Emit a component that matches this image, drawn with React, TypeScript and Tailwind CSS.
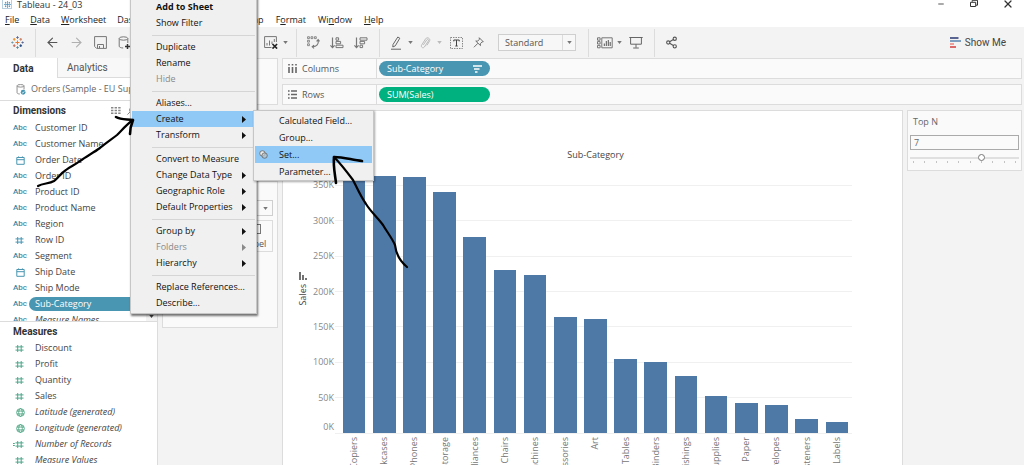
import React, { useState } from 'react'
import { ArrowLeft, ArrowRight, Minus, Share2, X } from 'lucide-react'

type FieldKind = 'text' | 'date' | 'number' | 'geo' | 'calc'

interface Field {
  name: string
  kind: FieldKind
  generated?: boolean
  selected?: boolean
}

interface MenuEntry {
  label: string
  sub?: boolean
  bold?: boolean
  disabled?: boolean
  active?: boolean
}

const menuBarLeft = [
  ['', 'F', 'ile'],
  ['', 'D', 'ata'],
  ['', 'W', 'orksheet'],
  ['Dash', 'b', 'oard'],
]

const menuBarRight = [
  ['', 'M', 'ap'],
  ['F', 'o', 'rmat'],
  ['Wi', 'n', 'dow'],
  ['', 'H', 'elp'],
]

const dimensions: Field[] = [
  { name: 'Customer ID', kind: 'text' },
  { name: 'Customer Name', kind: 'text' },
  { name: 'Order Date', kind: 'date' },
  { name: 'Order ID', kind: 'text' },
  { name: 'Product ID', kind: 'text' },
  { name: 'Product Name', kind: 'text' },
  { name: 'Region', kind: 'text' },
  { name: 'Row ID', kind: 'number' },
  { name: 'Segment', kind: 'text' },
  { name: 'Ship Date', kind: 'date' },
  { name: 'Ship Mode', kind: 'text' },
  { name: 'Sub-Category', kind: 'text', selected: true },
  { name: 'Measure Names', kind: 'text', generated: true },
]

const measures: Field[] = [
  { name: 'Discount', kind: 'number' },
  { name: 'Profit', kind: 'number' },
  { name: 'Quantity', kind: 'number' },
  { name: 'Sales', kind: 'number' },
  { name: 'Latitude (generated)', kind: 'geo', generated: true },
  { name: 'Longitude (generated)', kind: 'geo', generated: true },
  { name: 'Number of Records', kind: 'calc', generated: true },
  { name: 'Measure Values', kind: 'number', generated: true },
]

const contextMenu: MenuEntry[][] = [
  [{ label: 'Add to Sheet', bold: true }, { label: 'Show Filter' }],
  [{ label: 'Duplicate' }, { label: 'Rename' }, { label: 'Hide', disabled: true }],
  [{ label: 'Aliases...' }, { label: 'Create', sub: true, active: true }, { label: 'Transform', sub: true }],
  [
    { label: 'Convert to Measure' },
    { label: 'Change Data Type', sub: true },
    { label: 'Geographic Role', sub: true },
    { label: 'Default Properties', sub: true },
  ],
  [{ label: 'Group by', sub: true }, { label: 'Folders', sub: true, disabled: true }, { label: 'Hierarchy', sub: true }],
  [{ label: 'Replace References...' }, { label: 'Describe...' }],
]

const createMenu = ['Calculated Field...', 'Group...', 'Set...', 'Parameter...']

// Sales in thousands
const bars = [
  { name: 'Copiers', value: 368 },
  { name: 'Bookcases', value: 364 },
  { name: 'Phones', value: 362 },
  { name: 'Storage', value: 341 },
  { name: 'Appliances', value: 277 },
  { name: 'Chairs', value: 230 },
  { name: 'Machines', value: 224 },
  { name: 'Accessories', value: 164 },
  { name: 'Art', value: 161 },
  { name: 'Tables', value: 105 },
  { name: 'Binders', value: 100 },
  { name: 'Furnishings', value: 81 },
  { name: 'Supplies', value: 53 },
  { name: 'Paper', value: 43 },
  { name: 'Envelopes', value: 40 },
  { name: 'Fasteners', value: 20 },
  { name: 'Labels', value: 16 },
]
const axisMax = 376
const ticks = [0, 50, 100, 150, 200, 250, 300, 350]

const Logo = ({ className }: { className: string }) => (
  <svg viewBox="0 0 14 14" className={className} fill="none" strokeWidth="1.1">
    <path d="M7 4.8v4.4M4.8 7h4.4" stroke="#e8762c" />
    <path d="M7 .4v2.6M5.7 1.7h2.6" stroke="#5b6591" />
    <path d="M7 11v2.6M5.7 12.3h2.6" stroke="#5b879b" />
    <path d="M.3 7h2.4M1.5 5.8v2.4" stroke="#7099a6" />
    <path d="M11.3 7h2.4M12.5 5.8v2.4" stroke="#5b6591" />
    <path d="M3.5 2.2v2.8M2.1 3.6h2.8" stroke="#eb912c" />
    <path d="M10.5 2.2v2.8M9.1 3.6h2.8" stroke="#c98060" />
    <path d="M3.5 9v2.8M2.1 10.4h2.8" stroke="#c96a5a" />
    <path d="M10.5 9v2.8M9.1 10.4h2.8" stroke="#1f447e" />
  </svg>
)

const TitleLogo = () => (
  <svg viewBox="0 0 8 8" className="h-[7px] w-[7px]" fill="none" stroke="#3f86b5">
    <path d="M4 0v8M0 4h8M1.8 1v2M1 2h1.8M6.2 1v2M5.2 2H7M1.8 5v2M1 6h1.8M6.2 5v2M5.2 6H7" strokeWidth=".8" />
  </svg>
)

const Caret = ({ className = 'text-[#777]' }: { className?: string }) => (
  <svg viewBox="0 0 6 4" className={`h-[3px] w-[5px] shrink-0 ${className}`}>
    <path d="M0 0h6L3 4z" fill="currentColor" />
  </svg>
)

const KindIcon = ({ kind }: { kind: FieldKind }) => {
  if (kind === 'text') return <span className="font-['Roboto',sans-serif] text-[8px] font-medium text-[#3f87a3]">Abc</span>
  if (kind === 'date')
    return (
      <svg viewBox="0 0 9 9" className="h-[9px] w-[9px] text-[#4996b2]" fill="none" stroke="currentColor">
        <path d="M.8 1.5h7.4v6.8H.8zM.8 3.7h7.4M2.6.4v1M6.4.4v1" />
      </svg>
    )
  if (kind === 'geo')
    return (
      <svg viewBox="0 0 10 10" className="h-[9px] w-[9px] text-[#3f9f7b]" fill="none" stroke="currentColor" strokeWidth=".9">
        <circle cx="5" cy="5" r="4.3" />
        <ellipse cx="5" cy="5" rx="2" ry="4.3" />
        <path d="M1 3.4h8M1 6.6h8" />
      </svg>
    )
  return (
    <svg viewBox="0 0 12 9" className="h-[9px] w-3" fill="none" stroke="currentColor">
      <path d="M4.7 1v7M8.2 1v7M2.5 2.9h8M2.5 6.1h8" />
      {kind === 'calc' && <path d="M-.2 3.5h2M-.2 5.5h2" />}
    </svg>
  )
}

const FieldRow = ({ field, tint }: { field: Field; tint: string }) => (
  <li className="flex h-4 shrink-0 items-center">
    <span className={`flex w-[29px] shrink-0 justify-end ${tint} ${field.kind === 'text' ? 'pr-[2px]' : 'pr-[4px]'}`}>
      <KindIcon kind={field.kind} />
    </span>
    <span
      className={`flex-1 pl-[6px] leading-[14px] whitespace-nowrap ${field.generated ? 'italic' : ''} ${
        field.selected ? 'rounded-l-full bg-[#4996b2] text-white' : 'text-[#444]'
      }`}
    >
      {field.name}
    </span>
  </li>
)

const ToolButton = ({ label, className = 'w-6', children }: { label: string; className?: string; children: React.ReactNode }) => (
  <button aria-label={label} className={`flex h-full shrink-0 items-center justify-center text-[#555] ${className}`}>
    {children}
  </button>
)

const Divider = () => <span className="h-7 w-px shrink-0 bg-[#dcdcdc]" />

const Toolbar = () => (
  <div className="flex h-[31px] shrink-0 items-center bg-[#f3f3f3]">
    <ToolButton label="Start page" className="w-[35px]">
      <Logo className="h-[13px] w-[13px]" />
    </ToolButton>
    <Divider />
    <span className="w-1" />
    <ToolButton label="Undo">
      <ArrowLeft className="h-[15px] w-[15px]" strokeWidth={1.8} />
    </ToolButton>
    <ToolButton label="Redo">
      <ArrowRight className="h-[15px] w-[15px] text-[#b0b0b0]" strokeWidth={1.8} />
    </ToolButton>
    <ToolButton label="Save">
      <svg viewBox="0 0 13 13" className="h-[13px] w-[13px]" fill="none" stroke="#777">
        <path d="M.6.6h11.8v11.8H2.6l-2-2zM3.5 12V8.5h6V12M5.5 10v2" />
      </svg>
    </ToolButton>
    <ToolButton label="New data source">
      <svg viewBox="0 0 13 14" className="h-[14px] w-[13px]" fill="none" stroke="#777">
        <ellipse cx="5.5" cy="2.5" rx="4.3" ry="1.7" />
        <path d="M1.2 2.5v7.7c0 1 1.6 1.7 4 1.8M9.8 2.5V7" />
        <path d="M9.5 8v5M7 10.5h5" stroke="#333" strokeWidth="1.5" />
      </svg>
    </ToolButton>
    <span className="w-[123px] shrink-0" />
    <ToolButton label="Clear sheet">
      <svg viewBox="0 0 14 13" className="h-[13px] w-[14px]" fill="none" stroke="#777">
        <path d="M7.5 11.5H.6V.6h11.8V6M3 9.5V7M5.5 9.5V4.5M8 8V5.5M10.3 6V3" />
        <path d="M8.5 8l4.6 4.6M13.1 8l-4.6 4.6" stroke="#222" strokeWidth="1.6" />
      </svg>
    </ToolButton>
    <Caret />
    <span className="w-2 shrink-0" />
    <Divider />
    <span className="w-1" />
    <ToolButton label="Swap rows and columns">
      <svg viewBox="0 0 14 14" className="h-[13px] w-[13px]" fill="none" stroke="#777" strokeWidth=".9">
        <path d="M.6.8h2v2h-2zM4.3.8h2v2h-2zM8 .8h2v2H8zM.6 4.6h2v2h-2zM.6 8.4h2v2h-2z" />
        <path d="M12 4.5c.8 4-1.5 7-6 7M10.3 5.8L12 3.8l1.5 2M7.6 9.8L5.6 11.5l2 1.8" strokeWidth="1.2" />
      </svg>
    </ToolButton>
    <ToolButton label="Sort ascending">
      <svg viewBox="0 0 14 12" className="h-3 w-[14px]" fill="none" stroke="#777">
        <path d="M2.5.5v10M.4 8.4l2.1 2.3 2.1-2.3" strokeWidth="1.2" />
        <path d="M6 .8h2.6v2.4H6zM6 4.4h4.6v2.4H6zM6 8.2h7v2.4H6z" />
      </svg>
    </ToolButton>
    <ToolButton label="Sort descending">
      <svg viewBox="0 0 14 12" className="h-3 w-[14px]" fill="none" stroke="#777">
        <path d="M2.5.5v10M.4 8.4l2.1 2.3 2.1-2.3" strokeWidth="1.2" />
        <path d="M6 .8h7v2.4H6zM6 4.4h4.6v2.4H6zM6 8.2h2.6v2.4H6z" />
      </svg>
    </ToolButton>
    <span className="w-[6px] shrink-0" />
    <Divider />
    <span className="w-1" />
    <ToolButton label="Highlight">
      <svg viewBox="0 0 12 14" className="h-[14px] w-3" fill="none" stroke="#666">
        <path d="M3 8.5L7.8 1l2 1.2L5.3 9.8 2.8 11zM1 13.2h10" />
      </svg>
    </ToolButton>
    <Caret />
    <ToolButton label="Group members">
      <svg viewBox="0 0 11 13" className="h-3 w-[11px]" fill="none" stroke="#b5b5b5">
        <path d="M3.2 8.5l3.6-5.3c1-1.3 2.6-.2 1.8 1.1L4.3 10.8c-1.5 1.9-4.2.2-3-2L5.6 2c1.8-2.6 5.8-.2 4.2 2.6L7 9" />
      </svg>
    </ToolButton>
    <Caret className="text-[#bbb]" />
    <ToolButton label="Show mark labels" className="w-7">
      <svg viewBox="0 0 13 12" className="h-3 w-[13px]" fill="none" stroke="#888">
        <path d="M.5.5h12v11H.5z" strokeDasharray="1.5 1" />
        <path d="M3.8 4.4V3h5.4v1.4M6.5 3v6M5.3 9h2.4" stroke="#444" />
      </svg>
    </ToolButton>
    <ToolButton label="Fix axes" className="w-4">
      <svg viewBox="0 0 12 12" className="h-[11px] w-[11px]" fill="none" stroke="#666">
        <path d="M6.8.8l4.4 4.4-1.4.2-1.8 2 .2 2L3 4.4l2.2.1L7 2.4zM5.4 6.8L1 11.2" />
      </svg>
    </ToolButton>
    <span className="w-3 shrink-0" />
    <div className="relative flex items-center">
      <select
        aria-label="Fit"
        className="h-[17px] w-[78px] appearance-none border border-[#cfcfcf] bg-[#f7f7f7] pl-[6px] leading-[15px] text-[#555]"
      >
        <option>Standard</option>
      </select>
      <span className="pointer-events-none absolute right-px flex h-[15px] w-[13px] items-center justify-center border-l border-[#dcdcdc]">
        <Caret />
      </span>
    </div>
    <span className="w-3 shrink-0" />
    <Divider />
    <span className="w-1" />
    <ToolButton label="Show cards">
      <svg viewBox="0 0 16 12" className="h-3 w-4" fill="none" stroke="#777">
        <path d="M.5.8h2.6v2.4H.5zM.5 4.6h2.6V7H.5zM.5 8.4h2.6v2.4H.5zM4.8.8h10.4v10H4.8z" />
        <path d="M7.3 9V6.5M9.3 9V4M11.3 9V3M13.2 9V5" stroke="#555" />
      </svg>
    </ToolButton>
    <Caret />
    <ToolButton label="Presentation mode" className="w-7">
      <svg viewBox="0 0 14 13" className="h-[13px] w-[14px]" fill="none" stroke="#666">
        <path d="M.3 1.5h13.4M1.6 1.5v6.7h10.8V1.5M7 8.2v3.5M4.2 12h5.6" />
      </svg>
    </ToolButton>
    <span className="w-1 shrink-0" />
    <Divider />
    <span className="w-1" />
    <ToolButton label="Share">
      <Share2 className="h-[13px] w-[13px]" strokeWidth={2} />
    </ToolButton>
    <button className="ml-auto flex items-center gap-1 pr-[18px] font-['Roboto',sans-serif] text-[10px] text-[#444]">
      <svg viewBox="0 0 11 11" className="h-[11px] w-[11px]" fill="none" strokeWidth="2">
        <path d="M0 1h8.5" stroke="#5b6591" />
        <path d="M0 4h11" stroke="#7f9fc0" />
        <path d="M0 7h4" stroke="#f0a09a" />
        <path d="M0 10h6" stroke="#dd6a6a" />
      </svg>
      Show Me
    </button>
  </div>
)

const DataPane = () => (
  <aside className="flex w-[158px] shrink-0 flex-col overflow-hidden border-r border-[#dcdcdc] bg-white">
    <div className="flex h-5 shrink-0 font-['Roboto',sans-serif] text-[10px]">
      <button className="w-[57px] pl-[13px] text-left font-bold text-[#333]">Data</button>
      <button className="flex-1 border-b border-l border-[#dcdcdc] bg-[#f8f8f8] pl-[9px] text-left text-[#555]">Analytics</button>
    </div>
    <div className="flex h-[23px] shrink-0 items-center gap-[5px] border-b border-[#dcdcdc] pl-4 whitespace-nowrap text-[#666]">
      <svg viewBox="0 0 10 12" className="h-[11px] w-[10px] shrink-0" fill="none" stroke="#888">
        <ellipse cx="4.5" cy="2" rx="3.8" ry="1.4" />
        <path d="M.7 2v7.5c0 .8 1.4 1.4 3 1.4M8.3 2v4" />
        <circle cx="7.3" cy="9" r="2.6" fill="#4996b2" stroke="none" />
        <path d="M6 9l1 1 1.6-2" stroke="#fff" strokeWidth=".8" />
      </svg>
      Orders (Sample - EU Superstore)
    </div>
    <div className="flex h-[19px] shrink-0 items-center justify-between pr-[22px] pl-[13px]">
      <h2 className="font-['Roboto',sans-serif] text-[10px] font-bold text-[#333]">Dimensions</h2>
      <span className="flex items-center gap-[6px] text-[#888]">
        <svg viewBox="0 0 10 7" className="h-[7px] w-[10px]" fill="currentColor">
          <path d="M0 0h2.4v1.6H0zM3.6 0H6v1.6H3.6zM7.2 0h2.4v1.6H7.2zM0 2.7h2.4v1.6H0zM3.6 2.7H6v1.6H3.6zM7.2 2.7h2.4v1.6H7.2zM0 5.4h2.4V7H0zM3.6 5.4H6V7H3.6zM7.2 5.4h2.4V7H7.2z" />
        </svg>
        <svg viewBox="0 0 8 8" className="h-2 w-2" fill="none" stroke="currentColor">
          <circle cx="5" cy="3" r="2.4" />
          <path d="M3.2 4.8L.4 7.6" />
        </svg>
      </span>
    </div>
    <div className="flex h-[202px] shrink-0 border-b border-[#dcdcdc]">
      <ul className="flex flex-1 flex-col overflow-hidden">
        {dimensions.map((f) => (
          <FieldRow key={f.name} field={f} tint="text-[#4996b2]" />
        ))}
      </ul>
      <div className="flex w-[11px] items-end justify-center bg-[#f3f3f3] pb-[3px]">
        <Caret className="text-[#444]" />
      </div>
    </div>
    <h2 className="flex h-[18px] shrink-0 items-center pl-[13px] font-['Roboto',sans-serif] text-[10px] font-bold text-[#333]">
      Measures
    </h2>
    <ul className="flex flex-1 flex-col overflow-hidden">
      {measures.map((f) => (
        <FieldRow key={f.name} field={f} tint="text-[#4fa58a]" />
      ))}
    </ul>
  </aside>
)

const CardsColumn = () => (
  <div className="flex w-[124px] shrink-0 flex-col gap-[5px] bg-[#f3f3f3] px-1 text-[#555]">
    <section className="h-[47px] border border-[#dcdcdc] bg-[#fafafa]" />
    <section className="h-[66px] border border-[#dcdcdc] bg-[#fafafa]" />
    <section className="flex h-[147px] flex-col gap-1 border border-[#dcdcdc] bg-[#fafafa] px-1 pt-[18px]">
      <div className="relative flex items-center">
        <select aria-label="Mark type" className="h-4 w-full appearance-none border border-[#cfcfcf] bg-[#fafafa]" />
        <span className="pointer-events-none absolute right-[5px]">
          <Caret />
        </span>
      </div>
      <button className="flex h-8 w-9 flex-col items-center justify-end gap-1 self-end border border-[#dcdcdc] pb-px leading-3">
        <span className="h-[10px] w-3 border border-[#777]" />
        Label
      </button>
    </section>
  </div>
)

const Shelf = ({ label, pill, pillClass, sorted }: { label: string; pill: string; pillClass: string; sorted?: boolean }) => (
  <div className="flex h-[21px] shrink-0 border border-[#dcdcdc] bg-[#fafafa]">
    <div className="flex w-[94px] items-center gap-[5px] border-r border-[#dcdcdc] pl-[5px] text-[#555]">
      <svg viewBox="0 0 9 9" className="h-[9px] w-[9px]" fill="none" stroke="#666" strokeWidth="1.6">
        {label === 'Columns' ? (
          <path d="M1 0v1.6M1 3v6M4.5 0v1.6M4.5 3v6M8 0v1.6M8 3v6" />
        ) : (
          <path d="M0 1h1.6M3 1h6M0 4.5h1.6M3 4.5h6M0 8h1.6M3 8h6" />
        )}
      </svg>
      {label}
    </div>
    <div className="flex flex-1 items-center pl-[2px]">
      <button className={`flex h-[15px] w-[111px] items-center justify-between rounded-full px-2 text-white ${pillClass}`}>
        {pill}
        {sorted && (
          <svg viewBox="0 0 9 8" className="h-2 w-[9px]" fill="none" stroke="currentColor" strokeWidth="1.4">
            <path d="M0 1h9M1 4h5.5M2 7h2.5" />
          </svg>
        )}
      </button>
    </div>
  </div>
)

const Chart = () => (
  <div className="flex flex-1 flex-col overflow-hidden border-t border-r border-l border-[#dcdcdc] bg-white pt-[37px]">
    <h3 className="h-[19px] shrink-0 pr-[50px] pl-[56px] text-center leading-[14px] text-[#444]">Sub-Category</h3>
    <div className="flex flex-1 pr-[50px]">
      <div className="flex w-[26px] items-center justify-end">
        <div className="flex flex-col items-center gap-1 pb-[22px] text-[#444]">
          <svg viewBox="0 0 8 8" className="h-2 w-2" fill="none" stroke="currentColor" strokeWidth="1.5">
            <path d="M1 0v8M4 3v5M7 6v2" />
          </svg>
          <span className="rotate-180 leading-3 [writing-mode:vertical-rl]">Sales</span>
        </div>
      </div>
      <div className="relative flex-1 pl-[30px]">
        {ticks.map((t) => (
          <div key={t} className="absolute right-0 left-0 flex h-3 translate-y-1/2 items-center" style={{ bottom: `${(t / axisMax) * 100}%` }}>
            <span className={`w-[25px] text-right leading-3 text-[#888] ${t === 0 ? 'pb-3' : ''}`}>{t}K</span>
            <span className="ml-px h-px flex-1 bg-[#f0f0f0]" />
          </div>
        ))}
        <div className="relative flex h-full items-end">
          {bars.map((b) => (
            <div key={b.name} className="flex h-full flex-1 items-end justify-center">
              <div className="w-3/4 bg-[#4e79a7]" style={{ height: `${(b.value / axisMax) * 100}%` }} />
            </div>
          ))}
        </div>
      </div>
    </div>
    <div className="flex h-8 shrink-0 items-start overflow-hidden pt-1 pr-[50px] pl-14">
      {bars.map((b) => (
        <div key={b.name} className="flex flex-1 justify-center">
          <span className="rotate-180 leading-3 whitespace-nowrap text-[#777] [writing-mode:vertical-rl]">{b.name}</span>
        </div>
      ))}
    </div>
  </div>
)

const ParameterCard = () => {
  const [topN, setTopN] = useState(7)
  return (
    <section className="mr-[2px] ml-1 flex h-[61px] w-[115px] shrink-0 flex-col border border-[#dcdcdc] bg-[#fafafa] px-[2px]">
      <label htmlFor="top-n" className="h-6 pt-[4px] pl-[3px] leading-[14px] text-[#666]">
        Top N
      </label>
      <input
        id="top-n"
        value={topN}
        onChange={(e) => setTopN(Number(e.target.value) || 1)}
        className="h-[15px] w-full border border-[#aaa] bg-[#fafafa] pl-[3px] leading-[13px] text-[#666]"
      />
      <input
        type="range"
        aria-label="Top N slider"
        min={1}
        max={10}
        value={topN}
        onChange={(e) => setTopN(Number(e.target.value))}
        className="mt-1 h-[7px] w-full appearance-none bg-[linear-gradient(#e0e0e0,#e0e0e0)] bg-[length:100%_2px] bg-center bg-no-repeat [&::-webkit-slider-thumb]:h-[7px] [&::-webkit-slider-thumb]:w-[7px] [&::-webkit-slider-thumb]:appearance-none [&::-webkit-slider-thumb]:rounded-full [&::-webkit-slider-thumb]:border [&::-webkit-slider-thumb]:border-[#777] [&::-webkit-slider-thumb]:bg-white"
      />
      <div className="flex justify-between px-[3px]">
        {Array.from({ length: 10 }, (_, i) => (
          <span key={i} className="h-[2px] w-px bg-[#c4c4c4]" />
        ))}
      </div>
    </section>
  )
}

const ContextMenu = () => (
  <div className="absolute -top-1 left-[130px] w-[127px] border border-[#c6c6c6] bg-[#f0f0f0] px-px py-[2px] shadow-[1px_2px_2px_rgba(0,0,0,0.55)]">
    {contextMenu.map((group, g) => (
      <div key={g}>
        {g > 0 && (
          <div className="flex h-2 items-center">
            <span className="ml-5 h-px flex-1 bg-[#d5d5d5]" />
          </div>
        )}
        {group.map((item) => (
          <button
            key={item.label}
            disabled={item.disabled}
            className={`flex h-4 w-full items-center justify-between pr-[9px] pl-6 text-left whitespace-nowrap ${
              item.active ? 'bg-[#90c8f6]' : ''
            } ${item.bold ? 'font-bold' : ''} ${item.disabled ? 'text-[#8a8a8a]' : 'text-[#111]'}`}
          >
            {item.label}
            {item.sub && (
              <svg viewBox="0 0 4 7" className="h-[7px] w-1 shrink-0" fill="currentColor">
                <path d="M0 0l4 3.5L0 7z" />
              </svg>
            )}
          </button>
        ))}
      </div>
    ))}
  </div>
)

const CreateMenu = () => (
  <div className="absolute top-[110px] left-[253px] w-[121px] border border-[#c6c6c6] bg-[#f0f0f0] px-px pt-px text-[#111] shadow-[1px_1px_2px_rgba(0,0,0,0.35)]">
    {createMenu.map((label) => (
      <button
        key={label}
        className={`flex h-[17px] w-full items-center text-left whitespace-nowrap ${label === 'Set...' ? 'bg-[#90c8f6]' : ''}`}
      >
        <span className="flex w-6 justify-start pl-1">
          {label === 'Set...' && (
            <svg viewBox="0 0 10 10" className="h-[9px] w-[9px]" stroke="#666" strokeWidth=".9">
              <circle cx="3.8" cy="3.8" r="3" fill="#e8e8e8" />
              <circle cx="6.2" cy="6.2" r="3" fill="#b9c4cc" fillOpacity=".7" />
            </svg>
          )}
        </span>
        {label}
      </button>
    ))}
  </div>
)

// Hand-drawn pointers over the two menus
const Annotations = () => (
  <svg
    width="420"
    height="280"
    className="pointer-events-none absolute top-0 left-0"
    fill="none"
    stroke="#000"
    strokeWidth="2.2"
    strokeLinecap="round"
    strokeLinejoin="round"
  >
    <path d="M38 186C43 183 49 184 54 181C58 178 61 173 66 170C71 166 75 165 80 161C87 156 93 153 100 148C106 143 112 139 117 135C122 130 127 124 133 120" />
    <path d="M116 117C121 120 127 119 133 120C131 125 130 129 130 134" strokeWidth="2.6" />
    <path d="M334 157C341 164 347 172 353 180C357 188 361 197 366 204C371 212 378 218 383 225C387 232 392 238 395 245C396 254 401 262 407 267" />
    <path d="M362 161C352 160 344 157 334 157C333 166 335 174 336 183" strokeWidth="2.6" />
  </svg>
)

const MenuBarItem = ({ parts: [before, key, after] }: { parts: string[] }) => (
  <button>
    {before}
    <u>{key}</u>
    {after}
  </button>
)

export default function App() {
  return (
    <div className="relative flex h-screen flex-col overflow-hidden bg-white font-['Open_Sans','Liberation_Sans',sans-serif] text-[9px]">
      <header className="flex h-3 shrink-0 items-start justify-between">
        <div className="flex items-center gap-[5px] pl-[2px] leading-[9px] text-[#333]">
          <span className="flex h-[9px] w-[10px] items-center justify-center border-r border-b border-l border-[#b8cfe0]">
            <TitleLogo />
          </span>
          Tableau - 24_03
        </div>
        <div className="flex h-2 items-center gap-6 pr-[10px] text-[#333]">
          <button aria-label="Minimize">
            <Minus className="h-2 w-[10px]" strokeWidth={2.5} />
          </button>
          <button aria-label="Restore">
            <svg viewBox="0 0 8 8" className="h-2 w-2" fill="none" stroke="currentColor">
              <path d="M.5 2.3h5.2v4.2H.5zM2.2 1.8V.3h5.3v4.9H6" />
            </svg>
          </button>
          <button aria-label="Close">
            <X className="h-3 w-3" strokeWidth={2.5} />
          </button>
        </div>
      </header>
      <nav className="flex h-[15px] shrink-0 items-center pl-[5px] text-[#222]">
        <div className="flex w-60 gap-[11px]">
          {menuBarLeft.map((parts) => (
            <MenuBarItem key={parts.join('')} parts={parts} />
          ))}
        </div>
        <div className="flex gap-3">
          {menuBarRight.map((parts) => (
            <MenuBarItem key={parts.join('')} parts={parts} />
          ))}
        </div>
      </nav>
      <Toolbar />
      <div className="flex min-h-0 flex-1 bg-[#f3f3f3]">
        <DataPane />
        <CardsColumn />
        <main className="flex min-w-0 flex-1 flex-col gap-[5px]">
          <div className="flex flex-col gap-[5px] pr-[2px]">
            <Shelf label="Columns" pill="Sub-Category" pillClass="bg-[#4996b2]" sorted />
            <Shelf label="Rows" pill="SUM(Sales)" pillClass="bg-[#00b180]" />
          </div>
          <div className="flex min-h-0 flex-1">
            <Chart />
            <ParameterCard />
          </div>
        </main>
      </div>
      <ContextMenu />
      <CreateMenu />
      <Annotations />
    </div>
  )
}
